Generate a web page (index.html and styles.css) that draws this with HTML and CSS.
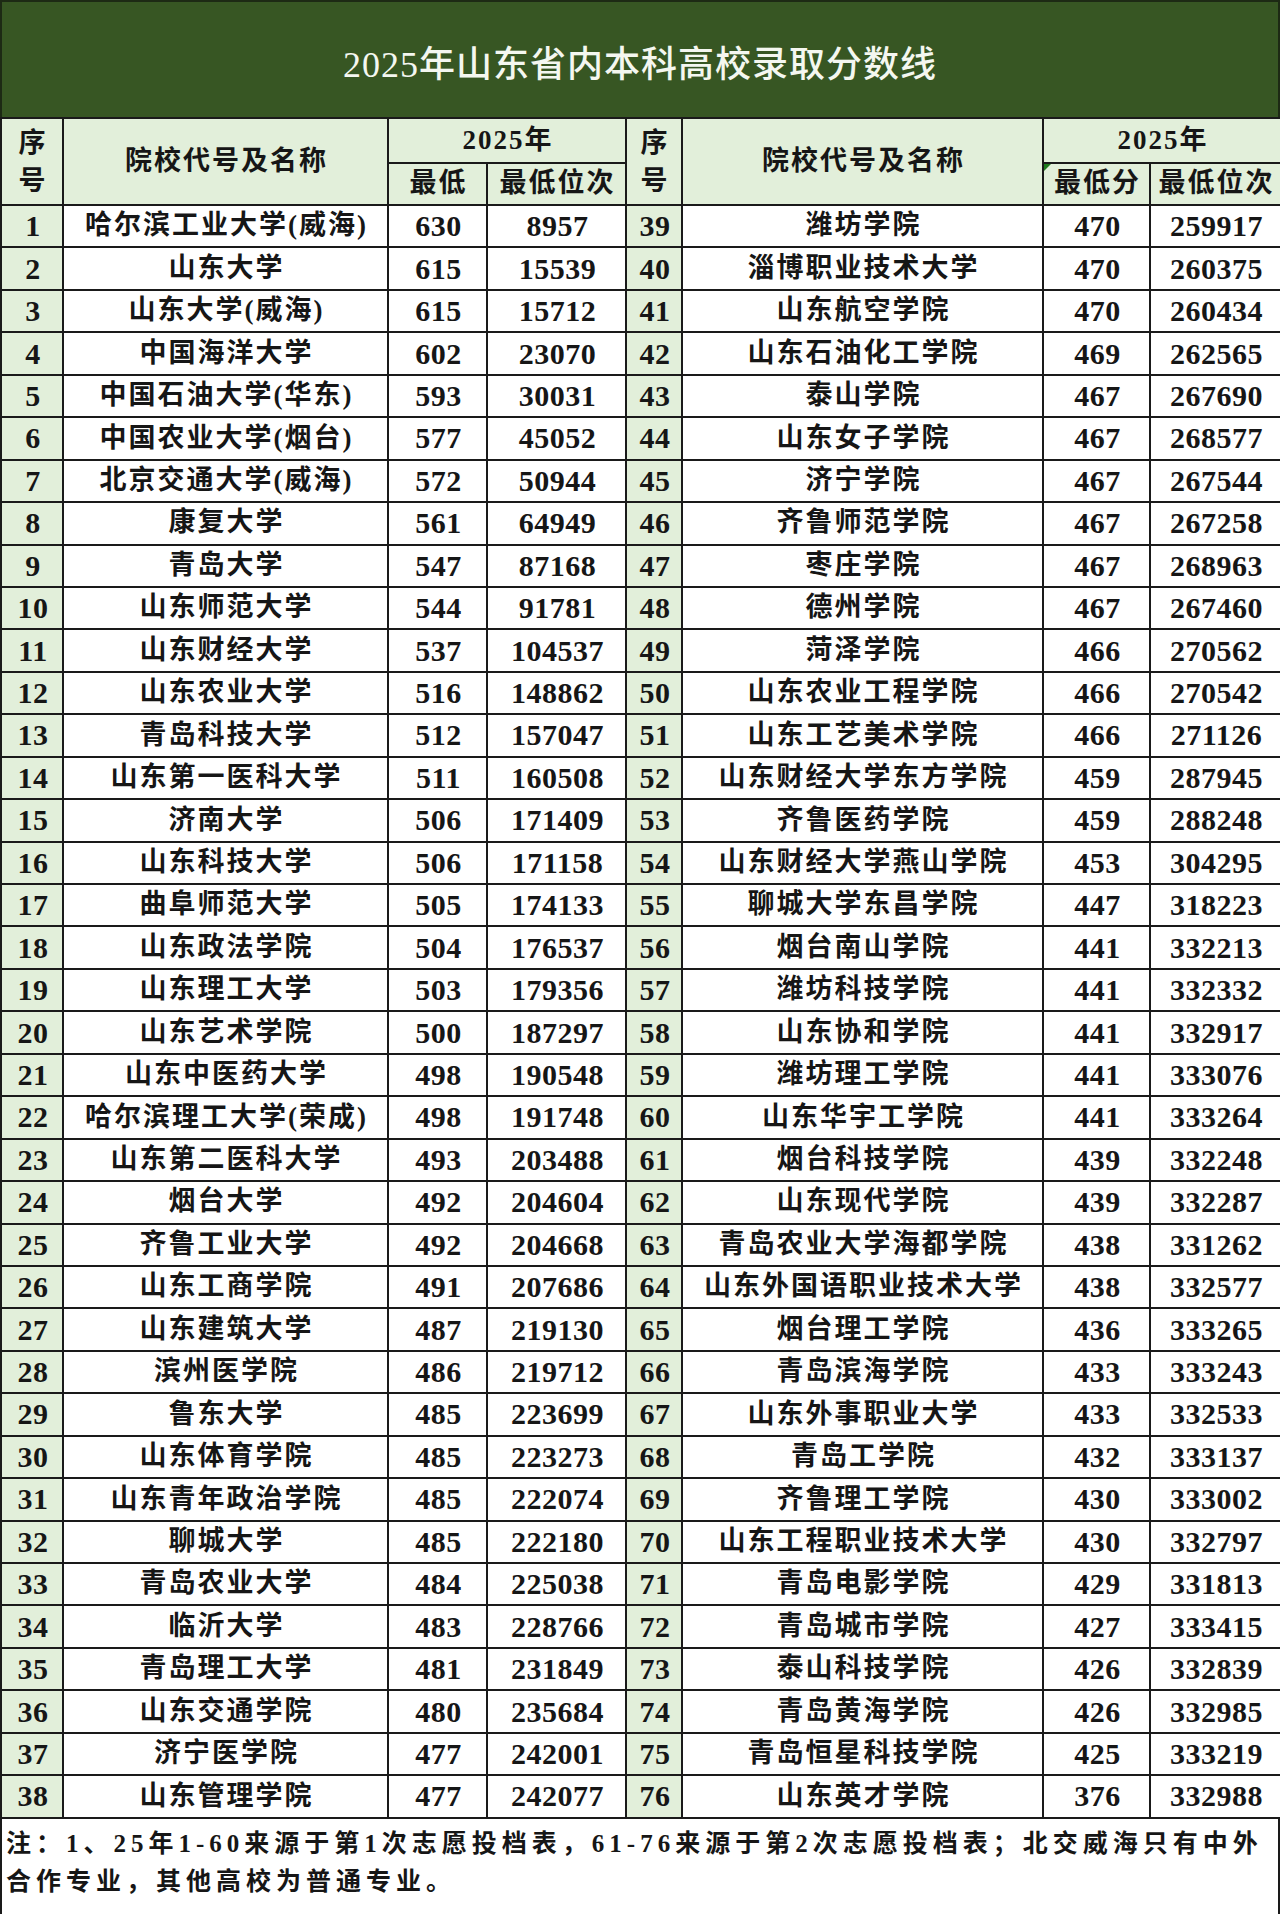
FILE: index.html
```html
<!DOCTYPE html>
<html lang="zh-CN">
<head>
<meta charset="utf-8">
<title>2025年山东省内本科高校录取分数线</title>
<link rel="stylesheet" href="styles.css">
</head>
<body>
<div class="sheet">
  <div class="title">2025年山东省内本科高校录取分数线</div>
  <table class="grid">
    <colgroup>
      <col class="c-seq"><col class="c-name"><col class="c-score"><col class="c-rank">
      <col class="c-seq2"><col class="c-name2"><col class="c-score2"><col class="c-rank2">
    </colgroup>
    <thead>
      <tr class="h1">
        <th rowspan="2" class="seq stack">序<br>号</th>
        <th rowspan="2">院校代号及名称</th>
        <th colspan="2">2025年</th>
        <th rowspan="2" class="seq stack">序<br>号</th>
        <th rowspan="2">院校代号及名称</th>
        <th colspan="2">2025年</th>
      </tr>
      <tr class="h2">
        <th>最低</th>
        <th>最低位次</th>
        <th class="flag">最低分</th>
        <th>最低位次</th>
      </tr>
    </thead>
    <tbody>
      <tr><td class="seq">1</td><td>哈尔滨工业大学(威海)</td><td>630</td><td>8957</td><td class="seq">39</td><td>潍坊学院</td><td>470</td><td>259917</td></tr>
      <tr><td class="seq">2</td><td>山东大学</td><td>615</td><td>15539</td><td class="seq">40</td><td>淄博职业技术大学</td><td>470</td><td>260375</td></tr>
      <tr><td class="seq">3</td><td>山东大学(威海)</td><td>615</td><td>15712</td><td class="seq">41</td><td>山东航空学院</td><td>470</td><td>260434</td></tr>
      <tr><td class="seq">4</td><td>中国海洋大学</td><td>602</td><td>23070</td><td class="seq">42</td><td>山东石油化工学院</td><td>469</td><td>262565</td></tr>
      <tr><td class="seq">5</td><td>中国石油大学(华东)</td><td>593</td><td>30031</td><td class="seq">43</td><td>泰山学院</td><td>467</td><td>267690</td></tr>
      <tr><td class="seq">6</td><td>中国农业大学(烟台)</td><td>577</td><td>45052</td><td class="seq">44</td><td>山东女子学院</td><td>467</td><td>268577</td></tr>
      <tr><td class="seq">7</td><td>北京交通大学(威海)</td><td>572</td><td>50944</td><td class="seq">45</td><td>济宁学院</td><td>467</td><td>267544</td></tr>
      <tr><td class="seq">8</td><td>康复大学</td><td>561</td><td>64949</td><td class="seq">46</td><td>齐鲁师范学院</td><td>467</td><td>267258</td></tr>
      <tr><td class="seq">9</td><td>青岛大学</td><td>547</td><td>87168</td><td class="seq">47</td><td>枣庄学院</td><td>467</td><td>268963</td></tr>
      <tr><td class="seq">10</td><td>山东师范大学</td><td>544</td><td>91781</td><td class="seq">48</td><td>德州学院</td><td>467</td><td>267460</td></tr>
      <tr><td class="seq">11</td><td>山东财经大学</td><td>537</td><td>104537</td><td class="seq">49</td><td>菏泽学院</td><td>466</td><td>270562</td></tr>
      <tr><td class="seq">12</td><td>山东农业大学</td><td>516</td><td>148862</td><td class="seq">50</td><td>山东农业工程学院</td><td>466</td><td>270542</td></tr>
      <tr><td class="seq">13</td><td>青岛科技大学</td><td>512</td><td>157047</td><td class="seq">51</td><td>山东工艺美术学院</td><td>466</td><td>271126</td></tr>
      <tr><td class="seq">14</td><td>山东第一医科大学</td><td>511</td><td>160508</td><td class="seq">52</td><td>山东财经大学东方学院</td><td>459</td><td>287945</td></tr>
      <tr><td class="seq">15</td><td>济南大学</td><td>506</td><td>171409</td><td class="seq">53</td><td>齐鲁医药学院</td><td>459</td><td>288248</td></tr>
      <tr><td class="seq">16</td><td>山东科技大学</td><td>506</td><td>171158</td><td class="seq">54</td><td>山东财经大学燕山学院</td><td>453</td><td>304295</td></tr>
      <tr><td class="seq">17</td><td>曲阜师范大学</td><td>505</td><td>174133</td><td class="seq">55</td><td>聊城大学东昌学院</td><td>447</td><td>318223</td></tr>
      <tr><td class="seq">18</td><td>山东政法学院</td><td>504</td><td>176537</td><td class="seq">56</td><td>烟台南山学院</td><td>441</td><td>332213</td></tr>
      <tr><td class="seq">19</td><td>山东理工大学</td><td>503</td><td>179356</td><td class="seq">57</td><td>潍坊科技学院</td><td>441</td><td>332332</td></tr>
      <tr><td class="seq">20</td><td>山东艺术学院</td><td>500</td><td>187297</td><td class="seq">58</td><td>山东协和学院</td><td>441</td><td>332917</td></tr>
      <tr><td class="seq">21</td><td>山东中医药大学</td><td>498</td><td>190548</td><td class="seq">59</td><td>潍坊理工学院</td><td>441</td><td>333076</td></tr>
      <tr><td class="seq">22</td><td>哈尔滨理工大学(荣成)</td><td>498</td><td>191748</td><td class="seq">60</td><td>山东华宇工学院</td><td>441</td><td>333264</td></tr>
      <tr><td class="seq">23</td><td>山东第二医科大学</td><td>493</td><td>203488</td><td class="seq">61</td><td>烟台科技学院</td><td>439</td><td>332248</td></tr>
      <tr><td class="seq">24</td><td>烟台大学</td><td>492</td><td>204604</td><td class="seq">62</td><td>山东现代学院</td><td>439</td><td>332287</td></tr>
      <tr><td class="seq">25</td><td>齐鲁工业大学</td><td>492</td><td>204668</td><td class="seq">63</td><td>青岛农业大学海都学院</td><td>438</td><td>331262</td></tr>
      <tr><td class="seq">26</td><td>山东工商学院</td><td>491</td><td>207686</td><td class="seq">64</td><td>山东外国语职业技术大学</td><td>438</td><td>332577</td></tr>
      <tr><td class="seq">27</td><td>山东建筑大学</td><td>487</td><td>219130</td><td class="seq">65</td><td>烟台理工学院</td><td>436</td><td>333265</td></tr>
      <tr><td class="seq">28</td><td>滨州医学院</td><td>486</td><td>219712</td><td class="seq">66</td><td>青岛滨海学院</td><td>433</td><td>333243</td></tr>
      <tr><td class="seq">29</td><td>鲁东大学</td><td>485</td><td>223699</td><td class="seq">67</td><td>山东外事职业大学</td><td>433</td><td>332533</td></tr>
      <tr><td class="seq">30</td><td>山东体育学院</td><td>485</td><td>223273</td><td class="seq">68</td><td>青岛工学院</td><td>432</td><td>333137</td></tr>
      <tr><td class="seq">31</td><td>山东青年政治学院</td><td>485</td><td>222074</td><td class="seq">69</td><td>齐鲁理工学院</td><td>430</td><td>333002</td></tr>
      <tr><td class="seq">32</td><td>聊城大学</td><td>485</td><td>222180</td><td class="seq">70</td><td>山东工程职业技术大学</td><td>430</td><td>332797</td></tr>
      <tr><td class="seq">33</td><td>青岛农业大学</td><td>484</td><td>225038</td><td class="seq">71</td><td>青岛电影学院</td><td>429</td><td>331813</td></tr>
      <tr><td class="seq">34</td><td>临沂大学</td><td>483</td><td>228766</td><td class="seq">72</td><td>青岛城市学院</td><td>427</td><td>333415</td></tr>
      <tr><td class="seq">35</td><td>青岛理工大学</td><td>481</td><td>231849</td><td class="seq">73</td><td>泰山科技学院</td><td>426</td><td>332839</td></tr>
      <tr><td class="seq">36</td><td>山东交通学院</td><td>480</td><td>235684</td><td class="seq">74</td><td>青岛黄海学院</td><td>426</td><td>332985</td></tr>
      <tr><td class="seq">37</td><td>济宁医学院</td><td>477</td><td>242001</td><td class="seq">75</td><td>青岛恒星科技学院</td><td>425</td><td>333219</td></tr>
      <tr><td class="seq">38</td><td>山东管理学院</td><td>477</td><td>242077</td><td class="seq">76</td><td>山东英才学院</td><td>376</td><td>332988</td></tr>
    </tbody>
  </table>
  <div class="note">注：1、25年1-60来源于第1次志愿投档表，61-76来源于第2次志愿投档表；北交威海只有中外<br>合作专业，其他高校为普通专业。</div>
</div>
</body>
</html>
```
FILE: styles.css
```css
html, body {
  margin: 0;
  padding: 0;
  background: #ffffff;
}

.sheet {
  width: 1280px;
  font-family: "Liberation Serif", "Noto Sans CJK SC", serif;
  color: #161616;
}

.title {
  height: 113px;
  background: #375623;
  border: 2px solid #1d2a14;
  border-bottom: none;
  display: flex;
  align-items: center;
  justify-content: center;
  color: #f4f7f0;
  font-size: 36px;
  font-weight: 500;
  letter-spacing: 1px;
  padding-top: 2px;
  box-sizing: content-box;
}

.grid {
  width: 1280px;
  table-layout: fixed;
  border-collapse: collapse;
}

.c-seq { width: 62px; }
.c-name { width: 325px; }
.c-score { width: 99px; }
.c-rank { width: 139px; }
.c-seq2 { width: 56px; }
.c-name2 { width: 361px; }
.c-score2 { width: 107px; }
.c-rank2 { width: 131px; }

.grid th,
.grid td {
  border: 2px solid #1a1a1a;
  padding: 0 0 0 2px;
  text-align: center;
  vertical-align: middle;
  font-size: 27px;
  font-weight: 700;
  letter-spacing: 2px;
  white-space: nowrap;
  overflow: hidden;
  line-height: 1.1;
}

.grid th {
  background: #e2efda;
}

.grid .h1 { height: 45px; }
.grid .h2 { height: 42px; }

.grid th.stack {
  line-height: 38px;
  padding-top: 0;
}

.grid th.flag {
  position: relative;
}

.grid th.flag::before {
  content: "";
  position: absolute;
  left: 0;
  top: 0;
  width: 0;
  height: 0;
  border-top: 7px solid #1e7a1e;
  border-right: 7px solid transparent;
}

.grid tbody tr {
  height: 42.45px;
}

.grid td {
  background: #ffffff;
}

.grid td:nth-child(1),
.grid td:nth-child(3),
.grid td:nth-child(4),
.grid td:nth-child(5),
.grid td:nth-child(7),
.grid td:nth-child(8) {
  font-size: 30px;
  letter-spacing: 0.5px;
  line-height: 1;
}

.grid td.seq {
  background: #e2efda;
}

.note {
  height: 97px;
  border: 2px solid #1a1a1a;
  border-top: none;
  padding: 6px 0 0 4px;
  box-sizing: border-box;
  font-size: 25px;
  font-weight: 700;
  letter-spacing: 5px;
  line-height: 38px;
  white-space: nowrap;
  overflow: hidden;
}
```
